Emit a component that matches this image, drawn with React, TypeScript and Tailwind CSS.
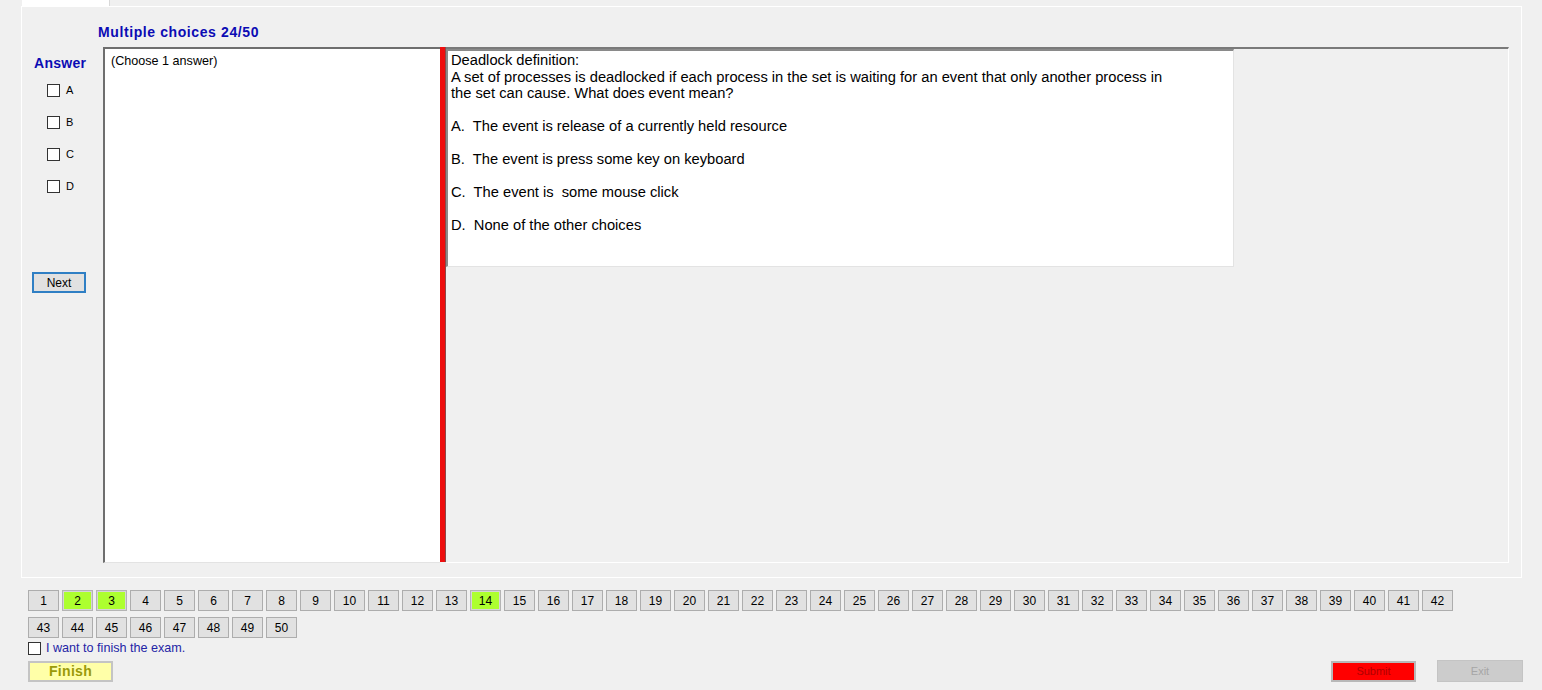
import React from "react";

const green = new Set([2, 3, 14]);

function PageBtn({ n }: { n: number }) {
  const g = green.has(n);
  return (
    <div
      className={`w-[31px] h-[21px] flex items-center justify-center border text-[12px] text-black ${
        g ? "bg-[#adff2f] border-[#b4b4b4] ring-1 ring-inset ring-[#d6d6d6]" : "bg-[#e1e1e1] border-[#adadad]"
      }`}
    >
      {n}
    </div>
  );
}

function Check({ label }: { label: string }) {
  return (
    <div className="h-[32px] flex items-center ml-[13px]">
      <div className="w-[13px] h-[13px] border border-[#333333] bg-white" />
      <span className="ml-[6px] text-[11px] text-black leading-none">{label}</span>
    </div>
  );
}

export default function App() {
  const row1 = Array.from({ length: 42 }, (_, i) => i + 1);
  const row2 = Array.from({ length: 8 }, (_, i) => i + 43);
  return (
    <div
      className="w-[1542px] h-[690px] bg-[#f0f0f0] flex flex-col overflow-hidden"
      style={{ fontFamily: '"Liberation Sans", Arial, sans-serif' }}
    >
      {/* tab header */}
      <div className="h-[6px] flex">
        <div className="ml-[22px] w-[88px] h-[6px] bg-white border-r border-[#d9d9d9]" />
      </div>
      {/* tab page */}
      <div className="ml-[21px] w-[1501px] h-[572px] border border-white flex flex-col">
        <div className="pl-[76px] mt-[17px] h-[16px] text-[14px] leading-[16px] font-bold tracking-[0.6px] text-[#0b0bb4]">
          Multiple choices 24/50
        </div>
        <div className="mt-[7px] flex h-[516px]">
          {/* left column */}
          <div className="w-[81px] pl-[12px] flex flex-col">
            <div className="mt-[8px] text-[14px] leading-[16px] font-bold tracking-[0.3px] text-[#0b0bb4]">Answer</div>
            <div className="mt-[3px] flex flex-col">
              <Check label="A" />
              <Check label="B" />
              <Check label="C" />
              <Check label="D" />
            </div>
            <div className="mt-[70px] -ml-[2px] w-[54px] h-[21px] border-2 border-[#2f7fc4] bg-[#e1e1e1] flex items-center justify-center text-[12px] text-black">
              Next
            </div>
          </div>
          {/* left text panel */}
          <div className="w-[337px] h-full bg-white border-l-2 border-t-2 border-l-[#6e6e6e] border-t-[#6e6e6e] border-b border-b-[#e3e3e3] pl-[6px] pt-[5px]">
            <div className="text-[12.6px] leading-[14px] text-black">(Choose 1 answer)</div>
          </div>
          {/* splitter */}
          <div className="w-[6px] h-[515px] bg-[#ee0e0e] border-r border-[#8a4a4a]" />
          {/* right panel */}
          <div className="w-[1063px] h-full border-t-2 border-t-[#7a7a7a] border-r border-r-white border-b border-b-white flex flex-col">
            <div className="w-[788px] h-[218px] bg-white border-l-2 border-t-2 border-l-[#8a8a8a] border-t-[#8a8a8a] border-r border-b border-r-[#e3e3e3] border-b-[#e3e3e3] pl-[3px] pt-[1px] text-[14.7px] leading-[16.5px] text-black">
              <div>Deadlock definition:</div>
              <div>A set of processes is deadlocked if each process in the set is waiting for an event that only another process in</div>
              <div>the set can cause. What does event mean?</div>
              <div>&nbsp;</div>
              <div className="whitespace-pre">A.  The event is release of a currently held resource</div>
              <div>&nbsp;</div>
              <div className="whitespace-pre">B.  The event is press some key on keyboard</div>
              <div>&nbsp;</div>
              <div className="whitespace-pre">C.  The event is  some mouse click</div>
              <div>&nbsp;</div>
              <div className="whitespace-pre">D.  None of the other choices</div>
            </div>
          </div>
        </div>
      </div>
      {/* page buttons */}
      <div className="pl-[28px] mt-[12px] flex gap-[3px]">
        {row1.map((n) => (
          <PageBtn key={n} n={n} />
        ))}
      </div>
      <div className="pl-[28px] mt-[6px] flex gap-[3px]">
        {row2.map((n) => (
          <PageBtn key={n} n={n} />
        ))}
      </div>
      <div className="pl-[28px] mt-[3px] h-[14px] flex items-center">
        <div className="w-[13px] h-[13px] border border-[#333333] bg-white" />
        <span className="ml-[5px] text-[12.6px] leading-none text-[#2424a6]">I want to finish the exam.</span>
      </div>
      <div className="pl-[28px] pr-[19px] mt-[5px] flex items-center">
        <div className="w-[85px] h-[21px] border-2 border-[#c4c4c4] bg-[#ffffa8] flex items-center justify-center text-[14px] font-bold tracking-[0.3px] text-[#9a9a0a]">
          Finish
        </div>
        <div className="flex-1" />
        <div className="w-[85px] h-[21px] border-2 border-[#b8b8b8] bg-[#ff0000] flex items-center justify-center text-[11px] text-[#b00000]">
          Submit
        </div>
        <div className="ml-[21px] w-[86px] h-[22px] bg-[#cccccc] border border-[#c4c4c4] flex items-center justify-center text-[11px] text-[#a6a6a6]">
          Exit
        </div>
      </div>
    </div>
  );
}
